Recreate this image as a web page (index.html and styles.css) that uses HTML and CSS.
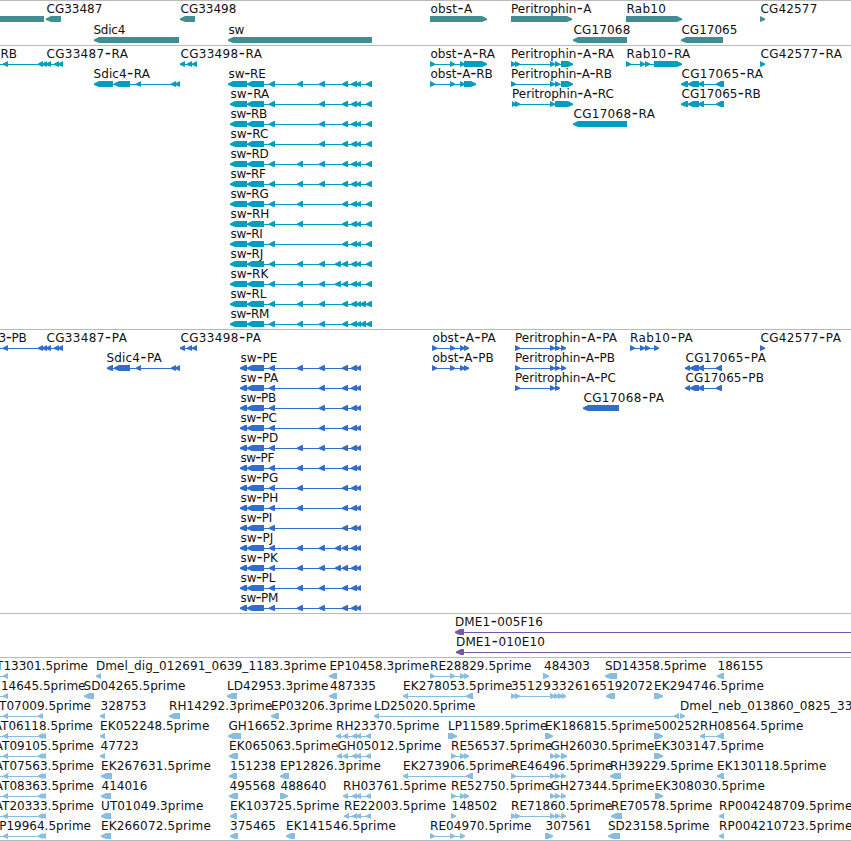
FILE: index.html
```html
<!DOCTYPE html>
<html lang="en">
<head>
<meta charset="utf-8">
<title>Genome browser</title>
<link rel="stylesheet" href="styles.css">
</head>
<body>
<main class="browser" id="browser"></main>
<script src="tracks.js"></script>
</body>
</html>
```
FILE: styles.css
```css
body {
  margin: 0;
  background: #fff;
  overflow: hidden;
}

.browser {
  display: flex;
  flex-direction: column;
  width: 851px;
  height: 841px;
  overflow: hidden;
}

.track {
  display: block;
  flex: none;
  width: 851px;
  box-sizing: border-box;
  border-top: 1px solid #b9b9b9;
}

.track-gene { height: 45px; color: #408e94; }
.track-transcript { height: 284px; color: #009fc0; }
.track-protein { height: 284px; color: #306dcd; }
.track-bac { height: 44px; color: #7757a8; }
.track-est {
  height: 184px;
  color: #89bddf;
  border-bottom: 1px solid #b9b9b9;
}

.label {
  font-family: "DejaVu Sans", sans-serif;
  font-size: 12px;
  fill: #111;
}

.hyphen { font-size: 17px; }

.feature { fill: currentColor; }
```
FILE: tracks.js
```js
// Feature: [row, label, label start, label end, strand, exons, intron start]
// A null label start right-aligns the label; a 0 label end keeps its natural width.

function family(prefix) {
  const middle = {
    E: '297-303 319-325', A: '319-325', B: '319-325', C: '319-325',
    D: '297-303 319-325', F: '297-303 319-325', G: '297-303', H: '297-303', I: '',
    J: '297-303 319-325 335-341', K: '297-303 319-325 335-341',
    L: '297-303 319-325', M: '297-303 319-325'
  };
  const ends = prefix === 'R'
    ? [265.5, 269, 267, 268, 268.5, 265.5, 268.5, 269, 262.5, 263, 268, 266, 269]
    : [277, 278, 276, 276.5, 278, 274, 278, 278, 272, 273, 277.5, 275, 278];
  return 'EABCDFGHIJKLM'.split('').map((key, i) => {
    const x = prefix === 'P' ? 240 : i ? 230 : 228;
    const first = prefix === 'P' ? '240-247' : i ? '230-247' : '228-247';
    const last = prefix === 'P' ? '' : i > 10 ? '360-366 366-372' : '366-372';
    return [i + 1, 'sw-' + prefix + key, x, ends[i], '<',
      [first, '247-264 269-275', middle[key], '342-348 351-357 356-361', last].filter(Boolean).join(' ')];
  });
}

const left = '3-8 38-43 41-46';
const tracks = [
  { name: 'gene', step: 21, features: [
    [0, '', 0, 0, '', '-6-44'],
    [0, 'CG33487', 46, 0, '<', '46-61'],
    [1, 'Sdic4', 93, 125, '<', '94-179'],
    [0, 'CG33498', 180, 0, '<', '180-195'],
    [1, 'sw', 228, 244, '<', '228-372'],
    [0, 'obst-A', 430, 472, '>', '430-487'],
    [0, 'Peritrophin-A', 510.5, 591, '>', '511-572'],
    [1, 'CG17068', 573, 630, '<', '573-627'],
    [0, 'Rab10', 626, 665.5, '>', '626-682'],
    [1, 'CG17065', 681, 737, '<', '681-723'],
    [0, 'CG42577', 760, 817, '>', '760-765']
  ] },
  { name: 'transcript', step: 20, features: [
    [0, 'RB', 0, 0, '<', '3-8 38-43 42-47', 0],
    [0, 'CG33487-RA', 46, 127.5, '<', '46-51 54-59 58-63'],
    [1, 'Sdic4-RA', 93, 149.5, '<', '94-113 114-130 136-141 171-176 175-180'],
    [0, 'CG33498-RA', 180, 261.5, '<', '180-185 187-192 192-197'],
    ...family('R'),
    [0, 'obst-A-RA', 430, 494.5, '>', '430-435 450-455 460-465 464-487'],
    [1, 'obst-A-RB', 430, 492.5, '>', '430-435 450-455 460-465 464-476'],
    [0, 'Peritrophin-A-RA', 510.5, 613.5, '>', '511-516 515-520 550-555 555-560 561-573'],
    [1, 'Peritrophin-A-RB', 510.5, 611.5, '>', '511-516 550-555 555-560 561-573'],
    [2, 'Peritrophin-A-RC', 511.5, 613.5, '>', '512-516 515-520 550-555 555-573'],
    [3, 'CG17068-RA', 573, 654.5, '<', '573-627'],
    [0, 'Rab10-RA', 626, 690, '>', '626-631 640-645 645-650 654-682'],
    [1, 'CG17065-RA', 681, 762.5, '<', '681-688 688-699 698-704 716-724'],
    [2, 'CG17065-RB', 681, 760.5, '<', '681-688 688-699 698-704 716-724'],
    [0, 'CG42577-RA', 760, 841.5, '>', '760-765']
  ] },
  { name: 'protein', step: 20, features: [
    [0, '3-PB', -2, 26.5, '<', '3-8 38-43 42-47', 0],
    [0, 'CG33487-PA', 46, 126.5, '<', '46-51 54-59 58-63'],
    [1, 'Sdic4-PA', 106, 161.5, '<', '107-113 114-130 136-141 171-176 175-180'],
    [0, 'CG33498-PA', 180, 260.5, '<', '180-185 187-192 192-197'],
    ...family('P'),
    [0, 'obst-A-PA', 432, 495.5, '>', '432-437 450-455 460-465 464-469'],
    [1, 'obst-A-PB', 432, 493.5, '>', '432-437 450-455 460-465 464-469'],
    [0, 'Peritrophin-A-PA', 514.5, 616.5, '>', '515-520 550-555 555-560 561-566'],
    [1, 'Peritrophin-A-PB', 514.5, 614.5, '>', '515-520 550-555 555-560 561-566'],
    [2, 'Peritrophin-A-PC', 514.5, 615.5, '>', '515-520 550-555 555-560'],
    [3, 'CG17068-PA', 583, 663.5, '<', '583-619'],
    [0, 'Rab10-PA', 629.5, 692.5, '>', '630-635 640-645 645-650 654-659'],
    [1, 'CG17065-PA', 685, 765.5, '<', '685-690 690-699 698-704 716-722'],
    [2, 'CG17065-PB', 685, 763.5, '<', '685-690 690-699 698-704 716-722'],
    [0, 'CG42577-PA', 760, 840.5, '>', '760-765']
  ] },
  { name: 'bac', step: 20, features: [
    [0, 'DME1-005F16', 454.5, 542.5, '<', '455-464 900-905'],
    [1, 'DME1-010E10', 455.5, 544.5, '<', '456-464 900-905']
  ] },
  { name: 'est', step: 20, features: [
    [0, 'T13301.5prime', null, 88, '<', '3-8', 0],
    [0, 'Dmel_dig_012691_0639_1183.3prime', 95.5, 326, '<', '96-101'],
    [0, 'EP10458.3prime', 329, 429, '<', '329-337'],
    [0, 'RE28829.5prime', 429.5, 531, '>', '430-435 450-455 460-465 464-469'],
    [0, '484303', 543.5, 0, '>', '543-549'],
    [0, 'SD14358.5prime', 604.5, 706, '<', '605-617'],
    [0, '186155', 717, 0, '<', '717-724'],

    [1, '14645.5prime', null, 85.5, '<', '3-8', 0],
    [1, 'SD04265.5prime', 83, 185, '<', '84-94'],
    [1, 'LD42953.3prime', 226.5, 328, '<', '227-237'],
    [1, '487335', 329.5, 0, '<', '329-337'],
    [1, 'EK278053.5prime', 402.5, 512, '<', '403-408 466-473'],
    [1, '351293', 510.5, 558.5, '>', '511-516 515-520 550-555'],
    [1, '326165', 558.5, 606.5, '>', '554-559 558-563 562-566'],
    [1, '192072', 606.5, 0, '<', '606-615'],
    [1, 'EK294746.5prime', 653.5, 763.5, '>', '654-663'],

    [2, 'T07009.5prime', null, 91, '<', '3-8 38-43', 0],
    [2, '328753', 100, 0, '<', '100-105'],
    [2, 'RH14292.3prime', 168.5, 272, '<', '169-180'],
    [2, 'EP03206.3prime', 270.5, 371.5, '<', '271-279'],
    [2, 'LD25020.5prime', 373.5, 475, '<', '374-379 674-679'],
    [2, 'Dmel_neb_013860_0825_33', 679.5, 852, '>', '680-685'],

    [3, 'AT06118.5prime', null, 93, '<', left, 0],
    [3, 'EK052248.5prime', 99.5, 209, '<', '100-105'],
    [3, 'GH16652.3prime', 228, 332, '<', '228-241'],
    [3, 'RH23370.5prime', 335.5, 439, '<', '336-341 343-348 352-357 356-361 366-371'],
    [3, 'LP11589.5prime', 447.5, 547, '>', '448-457'],
    [3, 'EK186815.5prime', 544.5, 654, '>', '545-553'],
    [3, '500252', 653.5, 0, '>', '654-663'],
    [3, 'RH08564.5prime', 699.5, 803, '<', '700-705 717-724'],

    [4, 'AT09105.5prime', null, 94, '<', left, 0],
    [4, '47723', 100, 0, '<', '100-105'],
    [4, 'EK065063.5prime', 228.5, 338, '<', '229-238'],
    [4, 'GH05012.5prime', 337, 441, '<', '337-342 343-348 352-357 356-361 366-371'],
    [4, 'RE56537.5prime', 450.5, 552, '>', '451-456 460-465 464-469'],
    [4, 'GH26030.5prime', 550, 654, '>', '550-555 555-560 561-567'],
    [4, 'EK303147.5prime', 653.5, 763.5, '>', '654-663'],

    [5, 'AT07563.5prime', null, 94, '<', left, 0],
    [5, 'EK267631.5prime', 100.5, 210.5, '<', '101-112'],
    [5, '151238', 229.5, 0, '<', '229-237'],
    [5, 'EP12826.3prime', 279.5, 380.5, '<', '280-289'],
    [5, 'EK273906.5prime', 402.5, 512, '<', '403-408 466-473'],
    [5, 'RE46496.5prime', 510.5, 612, '>', '511-516 550-555 555-560 561-566'],
    [5, 'RH39229.5prime', 609.5, 713, '<', '610-621'],
    [5, 'EK130118.5prime', 716.5, 826, '<', '717-724'],

    [6, 'AT08363.5prime', null, 94, '<', left, 0],
    [6, '414016', 101, 0, '<', '101-111'],
    [6, '495568', 229, 0, '<', '229-238'],
    [6, '488640', 280, 0, '>', '280-288'],
    [6, 'RH03761.5prime', 342.5, 446, '<', '343-348 352-357 356-361 366-371'],
    [6, 'RE52750.5prime', 450.5, 552, '>', '451-456 460-465 464-469'],
    [6, 'GH27344.5prime', 550, 654, '>', '550-555 555-560 561-566'],
    [6, 'EK308030.5prime', 654.5, 764.5, '>', '655-663'],

    [7, 'AT20333.5prime', null, 94, '<', left, 0],
    [7, 'UT01049.3prime', 100.5, 203, '<', '101-111'],
    [7, 'EK103725.5prime', 229.5, 339, '<', '230-237'],
    [7, 'RE22003.5prime', 343.5, 445.5, '<', '344-349 352-357 356-361 366-371'],
    [7, '148502', 451, 0, '>', '451-456'],
    [7, 'RE71860.5prime', 510.5, 612, '>', '511-516 515-520 550-555 555-560 561-566'],
    [7, 'RE70578.5prime', 610.5, 712, '<', '611-622'],
    [7, 'RP004248709.5prime', 718.5, 852, '<', '719-724'],

    [8, 'P19964.5prime', null, 91, '<', left, 0],
    [8, 'EK266072.5prime', 100.5, 210.5, '<', '101-111'],
    [8, '375465', 229.5, 0, '<', '230-238'],
    [8, 'EK141546.5prime', 285.5, 395.5, '<', '286-295'],
    [8, 'RE04970.5prime', 429.5, 531, '>', '430-435 450-455 460-465'],
    [8, '307561', 545, 0, '>', '545-553'],
    [8, 'SD23158.5prime', 607.5, 709, '<', '608-620'],
    [8, 'RP004210723.5prime', 718.5, 852, '<', '719-724']
  ] }
];

function exonPath(a, b, strand, y) {
  if (!strand) return `M${a} ${y}H${b}V${y + 6}H${a}Z`;
  const tip = strand === '<' ? a : b;
  const tail = strand === '<' ? b : a;
  const dir = strand === '<' ? 1 : -1;
  const neck = tip + dir * Math.min(5, b - a);
  return `M${tip} ${y + 2.5}L${neck} ${y}H${tail}V${y + 6}H${neck}L${tip} ${y + 4}Z`;
}

function draw(track) {
  let out = '';
  for (const [row, label, x, end, strand, exons, intron] of track.features) {
    const y = 15 + row * track.step;
    const spans = exons.match(/-?\d+-\d+/g).map(s => s.match(/^(-?\d+)-(\d+)$/).slice(1).map(Number));
    const from = intron === undefined ? spans[0][0] + 2 : intron;
    const to = spans[spans.length - 1][1] - 2;
    if (spans.length > 1 || intron !== undefined) {
      out += `<rect class="feature" x="${from}" y="${y + 3}" width="${to - from}" height="1"/>`;
    }
    out += `<path class="feature" d="${spans.map(([a, b]) => exonPath(a, b, strand, y)).join('')}"/>`;
    if (!label) continue;
    const place = x === null
      ? `x="${end}" text-anchor="end"`
      : `x="${x + 0.5}"` + (end ? ` data-end="${end + 0.3}"` : '');
    const content = label.replace(/-/g, '<tspan class="hyphen">-</tspan>');
    out += `<text class="label" y="${y - 3}" ${place}>${content}</text>`;
  }
  return `<svg class="track track-${track.name}">${out}</svg>`;
}

document.getElementById('browser').innerHTML = tracks.map(draw).join('');

// Fit labels to their slot: slack goes round the hyphens where there are any.
for (const text of document.querySelectorAll('text[data-end]')) {
  const width = text.dataset.end - text.getAttribute('x');
  const label = text.textContent;
  const hyphens = label.split('-').length - 1;
  const slack = width - text.getComputedTextLength();
  if (hyphens) {
    const perHyphen = Math.max(-0.8, Math.min(0.8, slack / hyphens));
    const perLetter = (slack - perHyphen * hyphens) / (label.length - 1);
    text.setAttribute('dx', [...label].map((c, i) =>
      (i ? perLetter : 0) + (c === '-' || label[i - 1] === '-' ? perHyphen / 2 : 0)).join(' '));
  } else {
    text.setAttribute('textLength', width);
  }
}
```
